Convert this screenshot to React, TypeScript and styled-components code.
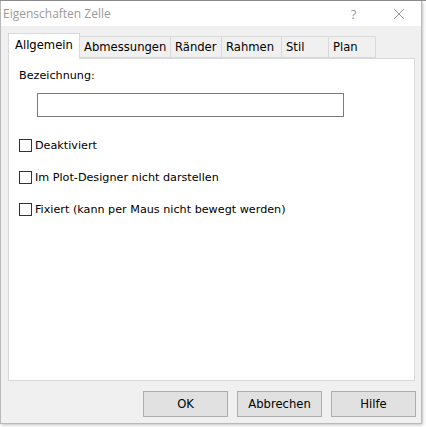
import React from 'react';
import styled, { createGlobalStyle } from 'styled-components';

const GlobalStyle = createGlobalStyle`
  html, body {
    margin: 0;
    padding: 0;
    background: #ffffff;
  }
  body {
    font-family: "DejaVu Sans", "Liberation Sans", sans-serif;
    font-size: 11px;
    color: #000;
  }
`;

const tabs = ['Allgemein', 'Abmessungen', 'Ränder', 'Rahmen', 'Stil', 'Plan'];
const tabWidths = [71, 91, 51, 60, 47, 47];

const options = [
  'Deaktiviert',
  'Im Plot-Designer nicht darstellen',
  'Fixiert (kann per Maus nicht bewegt werden)',
];

const App: React.FC = () => {
  return (
    <>
      <GlobalStyle />
      <Screen>
        <Dialog>
          <TitleBar>
            <Title>Eigenschaften Zelle</Title>
            <TitleButton>?</TitleButton>
            <TitleButton>
              <svg width="12" height="12" viewBox="0 0 12 12">
                <path d="M1 1 L11 11 M11 1 L1 11" stroke="#9a9a9a" strokeWidth="1" fill="none" />
              </svg>
            </TitleButton>
          </TitleBar>
          <Body>
            <TabStrip>
              {tabs.map((t, i) => (
                <Tab key={t} $active={i === 0} $width={tabWidths[i]}>
                  {t}
                </Tab>
              ))}
            </TabStrip>
            <Panel>
              <Label>Bezeichnung:</Label>
              <TextInput />
              <Options>
                {options.map((o) => (
                  <CheckRow key={o}>
                    <CheckBox />
                    <span>{o}</span>
                  </CheckRow>
                ))}
              </Options>
            </Panel>
            <ButtonBar>
              <Button>OK</Button>
              <Button>Abbrechen</Button>
              <Button>Hilfe</Button>
            </ButtonBar>
          </Body>
        </Dialog>
      </Screen>
    </>
  );
};

const Screen = styled.div`
  width: 426px;
  height: 427px;
  overflow: hidden;
  background: #ffffff;
  border-top: 1px solid #8a8a8a;
  box-sizing: border-box;
`;

const Dialog = styled.div`
  width: 422px;
  height: 423px;
  background: #f0f0f0;
  border: 1px solid #b9b9b9;
  border-top: none;
  box-sizing: border-box;
  display: flex;
  flex-direction: column;
  box-shadow: 1px 1px 3px rgba(0, 0, 0, 0.25);
`;

const TitleBar = styled.div`
  height: 25px;
  background: #ffffff;
  display: flex;
  align-items: center;
  padding-left: 2px;
  font-family: "Open Sans", "Noto Sans", sans-serif;
`;

const Title = styled.div`
  flex: 1;
  color: #9a9a9a;
  font-size: 12px;
`;

const TitleButton = styled.div`
  width: 45px;
  display: flex;
  justify-content: center;
  color: #9a9a9a;
  font-size: 13px;
`;

const Body = styled.div`
  flex: 1;
  display: flex;
  flex-direction: column;
  padding: 6px 6px 0 7px;
`;

const TabStrip = styled.div`
  display: flex;
  align-items: flex-end;
  height: 26px;
  position: relative;
  z-index: 1;
`;

const Tab = styled.div<{ $active: boolean; $width: number }>`
  width: ${(p) => p.$width + (p.$active ? 1 : 0)}px;
  height: ${(p) => (p.$active ? 26 : 22)}px;
  box-sizing: border-box;
  background: ${(p) => (p.$active ? '#ffffff' : '#f0f0f0')};
  border: 1px solid #d9d9d9;
  border-bottom: ${(p) => (p.$active ? 'none' : '1px solid #d9d9d9')};
  border-left: ${(p) => (p.$active ? '1px solid #d9d9d9' : 'none')};
  margin-bottom: ${(p) => (p.$active ? '-1px' : '0')};
  padding: ${(p) => (p.$active ? '4px 0 0 6px' : '3px 0 0 4px')};
  font-size: 11.6px;
  white-space: nowrap;
  overflow: hidden;
`;

const Panel = styled.div`
  height: 323px;
  background: #ffffff;
  border: 1px solid #d9d9d9;
  box-sizing: border-box;
  padding: 10px 0 0 10px;
  display: flex;
  flex-direction: column;
`;

const Label = styled.div`
  font-size: 11.2px;
  height: 16px;
`;

const TextInput = styled.div`
  width: 307px;
  height: 24px;
  box-sizing: border-box;
  border: 1px solid #7a7a7a;
  margin: 8px 0 0 18px;
`;

const Options = styled.div`
  display: flex;
  flex-direction: column;
  gap: 16px;
  margin-top: 20px;
`;

const CheckRow = styled.div`
  display: flex;
  align-items: center;
  gap: 3px;
  height: 16px;
  font-size: 11.2px;
`;

const CheckBox = styled.div`
  width: 13px;
  height: 13px;
  box-sizing: border-box;
  border: 1px solid #333333;
  background: #ffffff;
`;

const ButtonBar = styled.div`
  display: flex;
  justify-content: flex-end;
  gap: 9px;
  padding: 10px 0 0 0;
  margin-right: -1px;
`;

const Button = styled.div`
  width: 85px;
  height: 26px;
  box-sizing: border-box;
  background: #e1e1e1;
  border: 1px solid #adadad;
  display: flex;
  align-items: center;
  justify-content: center;
  font-size: 11.6px;
`;

export default App;
